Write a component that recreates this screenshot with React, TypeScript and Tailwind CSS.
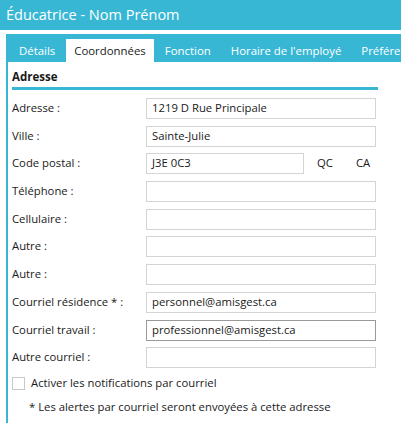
import React from 'react';

const tabs = ['Détails', 'Coordonnées', 'Fonction', "Horaire de l'employé", 'Préférences'];

const rows: { label: string; value?: string; dark?: boolean; postal?: boolean }[] = [
  { label: 'Adresse :', value: '1219 D Rue Principale' },
  { label: 'Ville :', value: 'Sainte-Julie' },
  { label: 'Code postal :', value: 'J3E 0C3', postal: true },
  { label: 'Téléphone :' },
  { label: 'Cellulaire :' },
  { label: 'Autre :' },
  { label: 'Autre :' },
  { label: 'Courriel résidence * :', value: 'personnel@amisgest.ca' },
  { label: 'Courriel travail :', value: 'professionnel@amisgest.ca', dark: true },
  { label: 'Autre courriel :' },
];

function Field({ value, dark, className }: { value?: string; dark?: boolean; className: string }) {
  return (
    <div
      className={`${className} h-[21px] border bg-white px-[5px] flex items-center text-[11.3px] text-[#1a1a1a] ${
        dark ? 'border-[#9a9a9a]' : 'border-[#d4d4d4]'
      }`}
    >
      {value}
    </div>
  );
}

export default function App() {
  return (
    <div
      className="w-[401px] h-[423px] overflow-hidden bg-white text-[#1a1a1a]"
      style={{ fontFamily: '"Segoe UI", "Open Sans", "Noto Sans", sans-serif' }}
    >
      {/* Title */}
      <div className="h-[30px] bg-[#38b7d5] px-[6px] flex items-center text-white text-[14.5px]">
        Éducatrice - Nom Prénom
      </div>

      <div className="mt-[4px] ml-[6px] border-l-2 border-[#38b7d5] h-[400px]">
        {/* Tabs */}
        <div className="h-[28px] bg-[#38b7d5] flex items-end gap-[2px] pl-[2px] whitespace-nowrap text-[11.4px] overflow-hidden">
          {tabs.map((t) =>
            t === 'Coordonnées' ? (
              <div key={t} className="h-[23px] px-[8px] bg-white text-[#1a1a1a] flex items-center">
                {t}
              </div>
            ) : (
              <div key={t} className="h-[23px] px-[9px] text-white flex items-center">
                {t}
              </div>
            )
          )}
        </div>

        <div className="pl-[4px] pr-[23px]">
          {/* Section heading */}
          <div className="pt-[7px] pb-[2px] text-[11.5px] font-bold leading-[16px] border-b-[3px] border-[#38b7d5]">
            Adresse
          </div>

          <div className="mt-[8px] flex flex-col gap-[6.7px] text-[11.3px]">
            {rows.map((r, i) => (
              <div key={i} className="flex items-center">
                <div className="w-[134px]">{r.label}</div>
                {r.postal ? (
                  <div className="flex items-center">
                    <Field value={r.value} className="w-[158px]" />
                    <span className="ml-[13px]">QC</span>
                    <span className="ml-[23px]">CA</span>
                  </div>
                ) : (
                  <Field value={r.value} dark={r.dark} className="w-[230px]" />
                )}
              </div>
            ))}
          </div>

          <div className="mt-[7px] flex items-center text-[11.3px]">
            <div className="w-[13px] h-[13px] border border-[#c8c8c8] bg-white" />
            <span className="ml-[6px]">Activer les notifications par courriel</span>
          </div>
          <div className="mt-[7px] pl-[17px] text-[11.3px]">
            * Les alertes par courriel seront envoyées à cette adresse
          </div>
        </div>
      </div>
    </div>
  );
}
